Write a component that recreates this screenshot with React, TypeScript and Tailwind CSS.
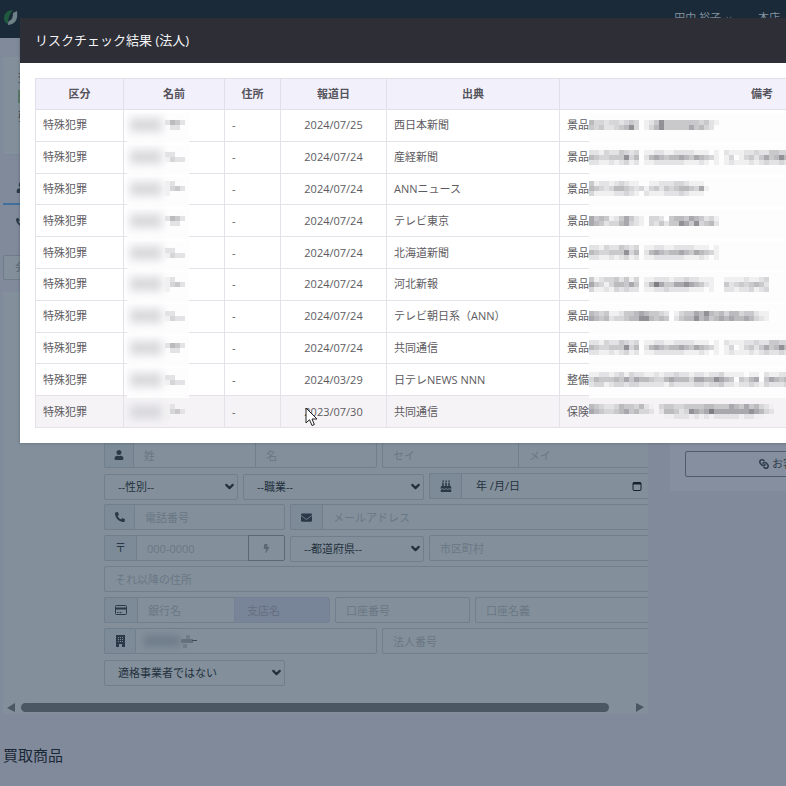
import React from "react";
import {
  FaUser,
  FaPhoneAlt,
  FaEnvelope,
  FaBirthdayCake,
  FaBolt,
  FaBuilding,
  FaLink,
} from "react-icons/fa";
import { ChevronDown } from "lucide-react";

type Row = {
  date: string;
  source: string;
  note: string;
  name: string[];
  mosaic: string[];
};

const NAME_A = ["2542", "0220"];
const NAME_B = ["2200", "1322"];
const NAME_C = ["1200", "1342", "1000"];
const TWO = ["53323323430124744444443421", "43422345730135744444645320"];
const THREE = ["22132243230112211222211101", "54334447350256545565465431", "22112123120112222221112101"];
const THREE_LONG = [
  "2213224323011221122221110102111223224433",
  "5433444735025654556546543101301342464575",
  "2211212312011222222111210101211121232232",
];

const rows: Row[] = [
  { date: "2024/07/25", source: "西日本新聞", note: "景品", name: NAME_A, mosaic: TWO },
  { date: "2024/07/24", source: "産経新聞", note: "景品", name: NAME_B, mosaic: THREE_LONG },
  {
    date: "2024/07/24",
    source: "ANNニュース",
    note: "景品",
    name: NAME_C,
    mosaic: ["412212321100112223321110", "543235543231342434554361", "311112232102111222321110"],
  },
  {
    date: "2024/07/24",
    source: "テレビ東京",
    note: "景品",
    name: NAME_A,
    mosaic: ["64541246421033204554654231", "65423356321032424476473452"],
  },
  { date: "2024/07/24", source: "北海道新聞", note: "景品", name: NAME_B, mosaic: THREE },
  {
    date: "2024/07/24",
    source: "河北新報",
    note: "景品",
    name: NAME_C,
    mosaic: ["412334241301122212232211100111121123", "643135546402586446676542100423434542", "311213232201122322221110100221223123"],
  },
  {
    date: "2024/07/24",
    source: "テレビ朝日系（ANN）",
    note: "景品",
    name: NAME_B,
    mosaic: ["543411244565443201344657545355344211", "654523345577545402455756456565565321"],
  },
  { date: "2024/07/24", source: "共同通信", note: "景品", name: NAME_A, mosaic: THREE_LONG },
  {
    date: "2024/03/29",
    source: "日テレNEWS NNN",
    note: "整備",
    name: NAME_B,
    mosaic: ["1122123132211212232212212231111011021122", "3544454646554335655536655765404356046545", "2331233233222221322223323342212232132223"],
  },
  {
    date: "2023/07/30",
    source: "共同通信",
    note: "保険",
    name: NAME_C,
    mosaic: ["5432235443521034433444455444654645321", "6543345645332025542376568666666676532", "0000000000000001122212121222221221100"],
  },
];

const shades = ["", "#f0f0f1", "#e3e3e5", "#d6d6d8", "#c9c9cc", "#bbbbbe", "#a9a9ad", "#929296", "#7f7f83"];

function Mosaic({ data, className }: { data: string[]; className?: string }) {
  const w = data[0].length * 5;
  const h = data.length * 5;
  return (
    <svg width={w} height={h} shapeRendering="crispEdges" className={className} aria-hidden="true">
      {data.flatMap((line, y) =>
        line
          .split("")
          .map((c, x) =>
            c === "0" ? null : (
              <rect key={`${x}-${y}`} x={x * 5} y={y * 5} width={5} height={5} fill={shades[Number(c)]} />
            )
          )
      )}
    </svg>
  );
}

const line = "border-[#717f8c]";

function Field({ label, className = "" }: { label: string; className?: string }) {
  return (
    <input
      aria-label={label}
      placeholder={label}
      className={`h-[26px] min-w-0 border ${line} bg-transparent px-[10px] text-[11px] text-[#2c3a48] outline-none placeholder:text-[#6a7784] ${className}`}
    />
  );
}

function Addon({ children, className = "" }: { children: React.ReactNode; className?: string }) {
  return (
    <span
      className={`flex h-[26px] shrink-0 items-center justify-center rounded-l-[2px] border border-r-0 ${line} bg-[#7d8a97] text-[11px] text-[#2a3847] ${className}`}
    >
      {children}
    </span>
  );
}

function Select({ label, className = "" }: { label: string; className?: string }) {
  return (
    <span className={`relative block h-[26px] shrink-0 ${className}`}>
      <select
        aria-label={label}
        className={`h-full w-full appearance-none rounded-[2px] border ${line} bg-transparent px-[13px] text-[11px] text-[#23303e] outline-none`}
      >
        <option>{label}</option>
      </select>
      <ChevronDown
        size={13}
        strokeWidth={4}
        className="pointer-events-none absolute top-[7px] right-[2px] text-[#23303e]"
      />
    </span>
  );
}

function CustomerForm() {
  return (
    <form className="-mr-[8px] flex flex-col gap-[5px] pt-[150px] pl-[101px]">
      <div className="flex gap-[5px]">
        <div className="flex w-[273px] shrink-0">
          <Addon className="w-[29px]"><FaUser size={10} /></Addon>
          <Field label="姓" className="w-[122px] border-r-0" />
          <Field label="名" className="flex-1 rounded-r-[2px]" />
        </div>
        <div className="flex min-w-0 flex-1">
          <Field label="セイ" className="w-[136px] rounded-l-[2px] border-r-0" />
          <Field label="メイ" className="flex-1" />
        </div>
      </div>
      <div className="flex gap-[5px]">
        <Select label="--性別--" className="w-[134px]" />
        <Select label="--職業--" className="w-[181px]" />
        <div className="flex min-w-0 flex-1">
          <Addon className="w-[32px]"><FaBirthdayCake size={12} /></Addon>
          <div className={`flex min-w-0 flex-1 items-center border ${line} pr-[13px] pl-[14px]`}>
            <input
              aria-label="生年月日"
              defaultValue="年 /月/日"
              className="min-w-0 flex-1 bg-transparent text-[11px] text-[#23303e] outline-none"
            />
            <svg width="10" height="10" viewBox="0 0 10 10" fill="none" stroke="#16222f" aria-hidden="true">
              <rect x="1" y="1.5" width="8" height="8" rx="1" />
              <path d="M1 2.5h8" strokeWidth="2" />
            </svg>
          </div>
        </div>
      </div>
      <div className="flex gap-[5px]">
        <div className="flex w-[181px] shrink-0">
          <Addon className="w-[30px]"><FaPhoneAlt size={10} /></Addon>
          <Field label="電話番号" className="flex-1 rounded-r-[2px]" />
        </div>
        <div className="flex min-w-0 flex-1">
          <Addon className="w-[32px]"><FaEnvelope size={11} /></Addon>
          <Field label="メールアドレス" className="flex-1" />
        </div>
      </div>
      <div className="flex gap-[5px]">
        <div className="flex w-[181px] shrink-0">
          <Addon className="w-[32px]">〒</Addon>
          <Field label="000-0000" className="flex-1 border-r-0" />
          <button
            type="button"
            aria-label="住所検索"
            className="flex h-[26px] w-[37px] items-center justify-center rounded-r-[2px] border border-[#5b6876] text-[#5b6876]"
          >
            <FaBolt size={9} />
          </button>
        </div>
        <Select label="--都道府県--" className="w-[134px]" />
        <Field label="市区町村" className="flex-1 rounded-l-[2px]" />
      </div>
      <Field label="それ以降の住所" className="w-full rounded-l-[2px]" />
      <div className="flex gap-[5px]">
        <div className="flex w-[226px] shrink-0">
          <Addon className="w-[33px]">
            <svg width="12" height="10" viewBox="0 0 12 10" fill="none" stroke="currentColor" aria-hidden="true">
              <rect x="0.5" y="0.5" width="11" height="9" rx="1" />
              <path d="M1 3.5h10" strokeWidth="2" />
              <path d="M2 7.5h1.5M4.5 7.5h2" />
            </svg>
          </Addon>
          <Field label="銀行名" className="w-[97px] border-r-0" />
          <input
            aria-label="支店名"
            placeholder="支店名"
            disabled
            className="h-[26px] min-w-0 flex-1 rounded-r-[3px] border border-[#748194] bg-[#788497] px-[12px] text-[11px] placeholder:text-[#647082]"
          />
        </div>
        <Field label="口座番号" className="w-[135px] rounded-[2px]" />
        <Field label="口座名義" className="flex-1 rounded-l-[2px]" />
      </div>
      <div className="flex gap-[5px]">
        <div className="flex w-[273px] shrink-0">
          <Addon className="w-[31px]">
            <svg width="9" height="12" viewBox="0 0 9 12" aria-hidden="true">
              <path
                fill="currentColor"
                fillRule="evenodd"
                d="M0 0h9v12H6V9H3v3H0zM2 2v1h1V2zM4 2v1h1V2zM6 2v1h1V2zM2 4v1h1V4zM4 4v1h1V4zM6 4v1h1V4zM2 6v1h1V6zM4 6v1h1V6zM6 6v1h1V6z"
              />
            </svg>
          </Addon>
          <div className={`flex h-[26px] flex-1 items-center rounded-r-[2px] border ${line} pl-[8px]`}>
            <span className="h-[12px] w-[36px] bg-[#717e8c] blur-[3px]" />
            <svg width="17" height="13" shapeRendering="crispEdges" aria-hidden="true">
              <path d="M6 0h4v4H6zM3 9h4v4H3z" fill="#717d8a" />
              <path d="M1 4h12v4H1z" fill="#63707d" />
              <path d="M12 5h5v1h-5z" fill="#3c4957" />
            </svg>
          </div>
        </div>
        <Field label="法人番号" className="flex-1 rounded-l-[2px]" />
      </div>
      <Select label="適格事業者ではない" className="w-[181px]" />
    </form>
  );
}

function ResultModal() {
  const th = "border border-[#e2dfe8] p-0 text-center font-semibold";
  const td = "border border-[#e4e2e8] py-0 px-[7px]";
  return (
    <section
      role="dialog"
      aria-labelledby="risk-title"
      className="absolute top-[18px] left-[20px] w-[960px] bg-white shadow-[0_0_3px_rgba(40,50,65,0.4)]"
    >
      <h2
        id="risk-title"
        className="flex h-[45px] items-center bg-[#2d2e36] px-[15px] text-[13px] font-normal text-[#f4f4f6]"
      >
        リスクチェック結果 (法人)
      </h2>
      <div className="p-[15px]">
        <table className="h-[350px] w-full table-fixed border-collapse text-[11px] leading-[16px] text-[#5d5b61]">
          <colgroup>
            <col className="w-[88px]" />
            <col className="w-[101px]" />
            <col className="w-[56px]" />
            <col className="w-[106px]" />
            <col className="w-[173px]" />
            <col />
          </colgroup>
          <thead>
            <tr className="h-[31px] bg-[#f2f0fa] text-[#55535b]">
              <th className={th}>区分</th>
              <th className={th}>名前</th>
              <th className={th}>住所</th>
              <th className={th}>報道日</th>
              <th className={th}>出典</th>
              <th className={th}>備考</th>
            </tr>
          </thead>
          <tbody>
            {rows.map((r, i) => {
              const last = i === rows.length - 1;
              const mask = last ? "h-[22px] bg-[#f5f3f6]" : "h-[30px] bg-[#fdfdfe]";
              return (
                <tr key={i} className={last ? "bg-[#f5f3f6]" : "bg-white"}>
                  <td className={td}>特殊犯罪</td>
                  <td className="border border-[#e4e2e8] py-0 pr-0 pl-[3px]">
                    <div className="relative flex h-[16px] items-center">
                      <span className={`absolute -top-[4px] left-0 w-[62px] ${mask}`} />
                      <span className="relative ml-[3px] h-[14px] w-[32px] bg-[#d9d9dc] blur-[4px]" />
                      <Mosaic data={r.name} className="relative ml-[3px]" />
                    </div>
                  </td>
                  <td className={td}>-</td>
                  <td className={`${td} text-center`}>{r.date}</td>
                  <td className={td}>{r.source}</td>
                  <td className={`${td} whitespace-nowrap`}>
                    <div className="flex h-[16px] items-center">
                      {r.note}
                      <div className="relative flex h-[16px] flex-1 items-center">
                        <span className={`absolute -top-[4px] left-0 w-full ${mask}`} />
                        <Mosaic data={r.mosaic} className="relative" />
                      </div>
                    </div>
                  </td>
                </tr>
              );
            })}
          </tbody>
        </table>
      </div>
    </section>
  );
}

export default function App() {
  return (
    <div className="relative h-screen overflow-hidden bg-[#808a9b] font-['Open_Sans','Noto_Sans_CJK_JP',sans-serif] text-[#2c3a48]">
      <header className="flex h-[38px] items-center justify-between bg-[#1b2a38] pr-[6px] pb-[2px] pl-[4px] text-[11px] text-[#8794a2]">
        <svg width="14" height="16" viewBox="0 0 14 16" aria-hidden="true">
          <path d="M9 0C3 0 0 4 0 8c0 3 1 5 4 6 0-5 1-9 5-14z" fill="#1f5a3f" />
          <path d="M13 1c1 8-1 13-9 14 0-2 0-3 1-4 3-1 4-4 4-8z" fill="#6f8288" />
        </svg>
        <div className="flex items-center">
          <span>田中 裕子</span>
          <ChevronDown size={8} className="mr-[25px] ml-[4px]" />
          <span>本店</span>
        </div>
      </header>

      <main className="pt-[19px] pl-[3px]">
        <section className="flex h-[98px] flex-col gap-[7px] border-b border-[#7b8897] bg-[#83909b] pt-[14px] pl-[15px] text-[11px] leading-[14px]">
          <span>査定</span>
          <span className="-mt-[2px] h-[13px] w-[40px] bg-[#5c7c68]" />
          <span>要確認</span>
        </section>
        <nav className="flex h-[50px] items-center border-b-2 border-[#3f6f9c] pt-[17px] pl-[13px]">
          <FaUser size={11} />
        </nav>
        <div className="flex h-[50px] items-center pb-[16px] pl-[13px]">
          <FaPhoneAlt size={9} />
        </div>
        <button type="button" className="block h-[25px] w-[80px] rounded-[2px] border border-[#6f7c8a] bg-[#83909b] text-left text-[11px]">
          <span className="pl-[11px] text-[#5b6876]">会員</span>
        </button>

        <div className="mt-[12px] flex items-start gap-[22px]">
          <div className="h-[422px] min-w-0 flex-1 overflow-hidden bg-[#83909b]">
            <CustomerForm />
            <div className="flex items-center pt-[18px] pr-[4px] pl-[4px]" aria-hidden="true">
              <svg width="8" height="9"><path d="M8 0v9L0 5z" fill="#4b5863" /></svg>
              <div className="mr-[27px] ml-[6px] h-[9px] flex-1 rounded-full bg-[#4b5863]" />
              <svg width="8" height="9"><path d="M0 0v9l8-5z" fill="#4b5863" /></svg>
            </div>
          </div>
          <aside className="h-[199px] w-[116px] shrink-0 overflow-hidden bg-[#858f9f] pt-[159px] pl-[15px]">
            <button
              type="button"
              className="flex h-[26px] w-[240px] items-center gap-[3px] rounded-[2px] border border-[#4f5c6b] pl-[73px] text-[11px] text-[#2f3c4b]"
            >
              <FaLink size={10} className="rotate-90" />
              お客様情報
            </button>
          </aside>
        </div>

        <h3 className="pt-[30px] text-[15px] leading-[22px] text-[#1b2836]">買取商品</h3>
      </main>

      <ResultModal />

      <svg width="13" height="20" viewBox="0 0 13 20" className="absolute top-[407px] left-[305px]" aria-hidden="true">
        <path d="M1 1v15l3.5-3.3L7 18.5l2.4-1L7 12h5z" fill="#fff" stroke="#222" />
      </svg>
    </div>
  );
}
